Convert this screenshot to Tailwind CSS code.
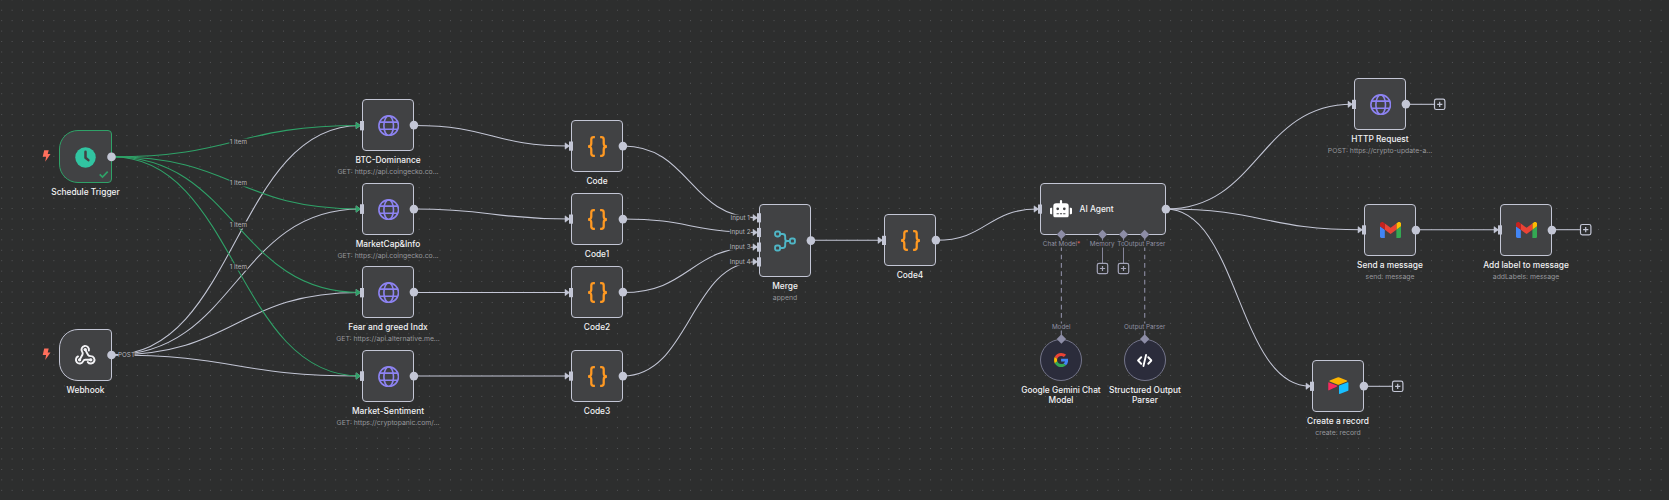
<!DOCTYPE html>
<html lang="en">
<head>
<meta charset="utf-8">
<title>Workflow canvas</title>
<script src="https://cdn.jsdelivr.net/npm/@tailwindcss/browser@4"></script>
</head>
<body class="bg-[#2d2e2e]">
<main id="canvas" class="relative h-[500px] w-[1669px] overflow-hidden bg-[#2d2e2e] font-['Inter',sans-serif]">
  <svg class="absolute inset-0" width="1669" height="500" fill="none">
    <defs>
      <pattern id="dots" x="-3.54" y="5" width="10.437" height="10.437" patternUnits="userSpaceOnUse">
        <circle cx="5.22" cy="5.22" r="0.52" fill="#5c5d61"/>
      </pattern>
    </defs>
    <rect width="1669" height="500" fill="url(#dots)"/>
    <g id="edges" stroke-width="1.05"></g>
  </svg>
  <div id="nodes"></div>
  <svg id="handles" class="absolute inset-0" width="1669" height="500" fill="none"></svg>
  <div id="labels"></div>
</main>

<svg class="hidden">
  <symbol id="globe" viewBox="0 0 24 24"><g fill="none" stroke="#8d83f2" stroke-width="1.8"><circle cx="12" cy="12" r="11"/><ellipse cx="12" cy="12" rx="5.4" ry="11"/><path d="M1.7 8h20.6M1.7 16h20.6"/></g></symbol>
  <symbol id="braces" viewBox="0 0 24 24"><path fill="none" stroke="#ff9922" stroke-width="2.6" d="M9 1.4H7.6Q4.900 1.400 4.900 4V8.600Q4.900 12 1.200 12Q4.900 12 4.900 15.400V20Q4.900 22.600 7.600 22.600H9M15 1.400H16.400Q19.100 1.400 19.100 4V8.600Q19.100 12 22.800 12Q19.100 12 19.100 15.400V20Q19.100 22.600 16.400 22.600H15"/></symbol>
  <symbol id="merge" viewBox="0 0 24 24"><g fill="none" stroke="#4fb6c6" stroke-width="2.100"><rect x="1.200" y="1.600" width="5.400" height="5.400" rx="2"/><rect x="1.200" y="17" width="5.400" height="5.400" rx="2"/><rect x="17.400" y="9.300" width="5.400" height="5.400" rx="2"/><path d="M6.600 4.300H9.500Q12.200 4.300 12.200 7V9.500Q12.200 12 14.500 12H17.400M6.600 19.700H9.500Q12.200 19.700 12.200 17V14.500Q12.200 12 14.500 12"/></g></symbol>
  <symbol id="clock" viewBox="0 0 24 24"><circle cx="12" cy="12" r="11.700" fill="#31c4a1"/><path d="M12 5.500V12.300L15.300 15" fill="none" stroke="#414244" stroke-width="2.900" stroke-linecap="round" stroke-linejoin="round"/></symbol>
  <symbol id="webhook" viewBox="0 0 24 24"><g fill="none" stroke="#f2f2f5" stroke-width="2.100" stroke-linecap="round" stroke-linejoin="round"><path d="M18 16.980h-5.990c-1.100 0-1.950.94-2.480 1.900A4 4 0 1 1 4.300 13.300"/><path d="m6 17 3.130-5.780c.53-.97.1-2.180-.5-3.100a4 4 0 1 1 7.300-1.200"/><path d="m12 6 3.130 5.730C15.660 12.700 16.900 13 18 13a4 4 0 1 1-3.200 6.400"/></g><g fill="#f2f2f5"><circle cx="12" cy="6" r="1.800"/><circle cx="6" cy="17" r="1.800"/><circle cx="18" cy="17" r="1.800"/></g></symbol>
  <symbol id="robot" viewBox="0 0 640 512"><path fill="#fff" d="M32,224H64V416H32A32,32,0,0,1,0,384V256A32,32,0,0,1,32,224Zm512-48V448a64,64,0,0,1-64,64H160a64,64,0,0,1-64-64V176a80,80,0,0,1,80-80H288V32a32,32,0,0,1,64,0V96H464A80,80,0,0,1,544,176ZM264,256a40,40,0,1,0-40,40A40,40,0,0,0,264,256Zm-8,128H192v32h64Zm96,0H288v32h64ZM456,256a40,40,0,1,0-40,40A40,40,0,0,0,456,256Zm-8,128H384v32h64ZM640,256V384a32,32,0,0,1-32,32H576V224h32A32,32,0,0,1,640,256Z"/></symbol>
  <symbol id="gmail" viewBox="52 42 88 66"><path fill="#4285f4" d="M58 108h14V74L52 59v43c0 3.320 2.690 6 6 6"/><path fill="#34a853" d="M120 108h14c3.320 0 6-2.690 6-6V59l-20 15"/><path fill="#fbbc04" d="M120 48v26l20-15v-8c0-7.420-8.470-11.650-14.400-7.200"/><path fill="#ea4335" d="M72 74V48l24 18 24-18v26L96 92"/><path fill="#c5221f" d="M52 51v8l20 15V48l-5.600-4.200c-5.940-4.450-14.400-.22-14.400 7.200"/></symbol>
  <symbol id="airtable" viewBox="0 0 200 170"><path fill="#fcb400" d="M90.039 12.368 24.079 39.660c-3.667 1.519-3.630 6.729.062 8.192l66.235 26.266a24.580 24.580 0 0 0 18.120 0l66.236-26.266c3.690-1.463 3.729-6.673.062-8.192l-65.960-27.293a24.580 24.580 0 0 0-18.795 0"/><path fill="#18bfff" d="M105.312 88.460v65.617c0 3.120 3.147 5.258 6.048 4.108l73.806-28.648a4.420 4.420 0 0 0 2.790-4.108V59.813c0-3.121-3.147-5.258-6.048-4.108l-73.806 28.648a4.420 4.420 0 0 0-2.790 4.108"/><path fill="#f82b60" d="m88.078 91.846-21.904 10.576-2.224 1.075-46.238 22.155c-2.930 1.414-6.672-.722-6.672-3.978V60.088c0-1.178.604-2.195 1.414-2.960a5 5 0 0 1 1.120-.84c1.104-.663 2.680-.84 4.020-.31L87.710 83.760c3.564 1.414 3.844 6.408.368 8.087"/></symbol>
  <symbol id="google" viewBox="2 2 44 44"><path fill="#fbbc05" d="M9.800 24c0-1.500.3-3 .7-4.400l-7.900-6C1.100 16.700.2 20.300.2 24s.9 7.300 2.400 10.400l7.900-6c-.4-1.400-.7-2.900-.7-4.400z" transform="translate(2 0) scale(.96 1)"/><path fill="#ea4335" d="M24 11.500c3.300 0 6.300 1.200 8.600 3.100l6.800-6.800C35.300 4.200 30 2 24 2 15.400 2 8 6.900 4.400 14.100l7.700 6C14 15.100 18.500 11.500 24 11.500z"/><path fill="#34a853" d="M24 36.500c-5.500 0-10-3.600-11.900-8.600l-7.700 6C8 41.100 15.400 46 24 46c5.700 0 11.100-2 15.200-5.800l-7.400-5.700c-2.100 1.300-4.700 2-7.800 2z"/><path fill="#4285f4" d="M45.500 20H24v8.700h12.300c-.6 2.500-2.100 4.500-4.500 5.800l7.400 5.700C43.500 36.300 46 30.600 46 24c0-1.300-.2-2.700-.5-4z"/></symbol>
  <symbol id="codetag" viewBox="0 0 24 20"><path fill="none" stroke="#fff" stroke-width="2.900" stroke-linecap="round" stroke-linejoin="round" d="M6.500 5 1.700 10l4.800 5M17.500 5l4.800 5-4.800 5M14 1.500 10 18.500"/></symbol>
</svg>

<script>
const GREY = '#c3c6d5', GREEN = '#2fa268', VIOLET = '#8d8da6';
const box = 'absolute border bg-[#414244]';
const card = box + ' rounded-[4px] border-[#c3c6d5]';
const trigger = box + ' rounded-r-[4px] rounded-l-[19px]';
const disc = 'absolute rounded-full border border-[#74758a] bg-[#2b2c3b]';
const globe = ['globe', 21.4, 21.4, 'ml-px mt-px'], braces = ['braces', 21, 21, 'mt-px'], gmail = ['gmail', 21.2, 16, 'ml-px'];

// left, top, width, height, classes, [icon, width, height, classes], title, subtitle
const nodes = [
  [59, 130, 53, 53, trigger + ' border-[#2fa268]', ['clock', 21, 21, 'mt-px'], 'Schedule Trigger'],
  [59, 329, 53, 52, trigger + ' border-[#c3c6d5]', ['webhook', 22.4, 22.4, ''], 'Webhook'],
  [362, 99, 52, 52, card, globe, 'BTC-Dominance', 'GET: https://api.coingecko.co...'],
  [362, 183, 52, 52, card, globe, 'MarketCap&amp;Info', 'GET: https://api.coingecko.co...'],
  [362, 266, 52, 52, card, globe, 'Fear and greed Indx', 'GET: https://api.alternative.me...'],
  [362, 350, 52, 52, card, globe, 'Market-Sentiment', 'GET: https://cryptopanic.com/...'],
  [571, 120, 52, 52, card, braces, 'Code'],
  [571, 193, 52, 52, card, braces, 'Code1'],
  [571, 266, 52, 52, card, braces, 'Code2'],
  [571, 350, 52, 52, card, braces, 'Code3'],
  [759, 204, 52, 73, card, ['merge', 22, 22, ''], 'Merge', 'append'],
  [884, 214, 52, 52, card, braces, 'Code4'],
  [1040, 183, 126, 52, card, null, ''],
  [1040, 339, 42, 42, disc, ['google', 14.2, 14.2, ''], 'Google Gemini Chat<br>Model'],
  [1124, 339, 42, 42, disc, ['codetag', 15.5, 13, ''], 'Structured Output<br>Parser'],
  [1354, 78, 52, 52, card, globe, 'HTTP Request', 'POST: https://crypto-update-a...'],
  [1364, 204, 52, 52, card, gmail, 'Send a message', 'send: message'],
  [1500, 204, 52, 52, card, gmail, 'Add label to message', 'addLabels: message'],
  [1312, 360, 52, 52, card, ['airtable', 22.8, 19.4, ''], 'Create a record', 'create: record'],
];

const use = (id, w, h, cls) => `<svg class="${cls}" width="${w}" height="${h}"><use href="#${id}"/></svg>`;
document.getElementById('nodes').innerHTML = nodes.map(([x, y, w, h, cls, icon, title, sub]) => `
  <div class="${cls}" style="left:${x}px;top:${y}px;width:${w}px;height:${h}px">
    <div class="flex h-full w-full items-center justify-center">${icon ? use(...icon) : ''}</div>
  </div>
  <div class="absolute flex w-[140px] flex-col items-center whitespace-nowrap text-center" style="left:${x + w / 2 - 70}px;top:${y + h + 4}px">
    <div class="text-[8.35px] leading-[10px] font-medium text-[#f2f2f4]">${title}</div>
    ${sub ? `<div class="mt-[2px] text-[6.83px] leading-[9px] text-[#97989c]">${sub}</div>` : ''}
  </div>`).join('') + `
  <div class="absolute left-[1050px] top-[200px] flex h-[18px] items-center gap-[7.5px]">
    ${use('robot', 22, 17.6, '')}<span class="text-[8.35px] leading-none font-medium text-[#f2f2f4]">AI Agent</span>
  </div>`;

// source x, y, target x, y, colour
const edges = [
  [112, 355, 360, 125.5, GREY], [112, 355, 360, 209, GREY], [112, 355, 360, 292.5, GREY], [112, 355, 360, 376, GREY],
  [112, 156.8, 360, 125.5, GREEN], [112, 156.8, 360, 209, GREEN], [112, 156.8, 360, 292.5, GREEN], [112, 156.8, 360, 376, GREEN],
  [414, 125.5, 569, 146, GREY], [414, 209, 569, 219, GREY], [414, 292.5, 569, 292.5, GREY], [414, 376, 569, 376, GREY],
  [623, 146, 757, 217.7, GREY], [623, 219, 757, 232.4, GREY], [623, 292.5, 757, 247, GREY], [623, 376, 757, 261.8, GREY],
  [811, 240.3, 882, 240.3, GREY], [936, 240.3, 1038, 209, GREY],
  [1166, 209, 1352, 104.3, GREY], [1166, 209, 1362, 229.8, GREY], [1166, 209, 1310, 386.2, GREY],
  [1416, 229.8, 1498, 229.8, GREY],
];
const stubs = [[1406, 104.3, 1434], [1552, 229.7, 1580], [1364, 386.3, 1392]];
document.getElementById('edges').innerHTML =
  edges.map(([a, b, c, d, col]) => {
    const m = (a + c) / 2;
    return `<path stroke="${col}" d="M${a} ${b}C${m} ${b} ${m} ${d} ${c} ${d}"/>`;
  }).join('') +
  stubs.map(([x, y, e]) => `<path stroke="${GREY}" d="M${x} ${y}H${e}"/>`).join('') +
  [1061.4, 1144.7].map(x => `<path stroke="#85859a" stroke-width="1.2" stroke-dasharray="4.7 3.65" d="M${x} 334.5V238"/><path stroke="#85859a" d="M${x} 331V338"/>`).join('') +
  [1102.5, 1123.5].map(x => `<path stroke="#85859a" d="M${x} 236V263"/>`).join('');

const plus = (x, y, col) => `<rect x="${x - 5.2}" y="${y - 5.2}" width="10.4" height="10.4" rx="1.8" stroke-width="1.2" stroke="${col}"/><path stroke-width="1.2" stroke="${col}" d="M${x - 2.6} ${y}H${x + 2.6}M${x} ${y - 2.6}V${y + 2.6}"/>`;
const diamond = (x, y) => `<path fill="${VIOLET}" d="M${x} ${y - 4.7}L${x + 4.7} ${y}L${x} ${y + 4.7}L${x - 4.7} ${y}Z"/>`;
const outputs = [[111.5, 156.9], [111.5, 355]];
nodes.forEach(([x, y, w, h], i) => { if (i > 1 && w !== 42) outputs.push([x + w - .1, y + h / 2 + .1]); });
document.getElementById('handles').innerHTML =
  edges.map(([, , x, y, col]) => `<path fill="${col}" stroke="${col}" stroke-width=".5" stroke-linejoin="round" d="M${x - 4} ${y - 3.2}L${x + .5} ${y}L${x - 4} ${y + 3.2}Z"/>`).join('') +
  edges.map(([, , x, y]) => `<rect fill="${GREY}" x="${x}" y="${y - 4.5}" width="4" height="9.2"/>`).join('') +
  outputs.map(([x, y]) => `<circle fill="${GREY}" cx="${x}" cy="${y}" r="4.3"/>`).join('') +
  [[1439.7, 104.3], [1585.7, 229.7], [1397.7, 386.3]].map(([x, y]) => plus(x, y, GREY)).join('') +
  [1102.5, 1123.5].map(x => plus(x, 268.5, '#a3a4b8')).join('') +
  [[1061.4, 234.5], [1102.5, 234.5], [1123.6, 234.5], [1144.7, 234.5], [1061.4, 339], [1144.7, 339]].map(p => diamond(...p)).join('') +
  [156, 354.3].map(y => `<path fill="#ff6f5c" transform="translate(42.5 ${y - 5.7})" d="M1.7 0H6.2L5.2 3.8H8L2.7 11.4L3.6 6.5H.2Z"/>`).join('') +
  `<path stroke="${GREEN}" stroke-width="1.7" d="M99.7 174.3L102.500 177L107.700 171.700"/>`;

// centre x, centre y, text, classes
const onEdge = 'bg-[#2d2e2e] text-[#b4b6bc]', soft = 'bg-[#2d2e2e] text-[#9091a2]';
const labels = [
  [238.3, 141.5, '1 Item', onEdge], [238.3, 182.5, '1 Item', onEdge], [238.3, 224.5, '1 Item', onEdge], [238.3, 266.5, '1 Item', onEdge],
  [126.5, 354.8, 'POST', onEdge],
  [740.2, 217.5, 'Input 1', onEdge], [740.2, 231.7, 'Input 2', onEdge], [740.2, 246.7, 'Input 3', onEdge], [740.2, 261.7, 'Input 4', onEdge],
  [1061.5, 243.7, 'Chat Model<span class="text-[#f0605a]">*</span>', soft], [1102.2, 243.7, 'Memory', soft],
  [1123.7, 243.7, 'Tool', soft], [1144.7, 243.7, 'Output Parser', soft],
  [1061.2, 326.5, 'Model', soft], [1144.7, 326.5, 'Output Parser', soft],
];
document.getElementById('labels').innerHTML = labels.map(([x, y, t, cls]) =>
  `<div class="absolute -translate-x-1/2 -translate-y-1/2 whitespace-nowrap text-[6.3px] leading-[7px] ${cls}" style="left:${x}px;top:${y}px">${t}</div>`).join('');
</script>
</body>
</html>
